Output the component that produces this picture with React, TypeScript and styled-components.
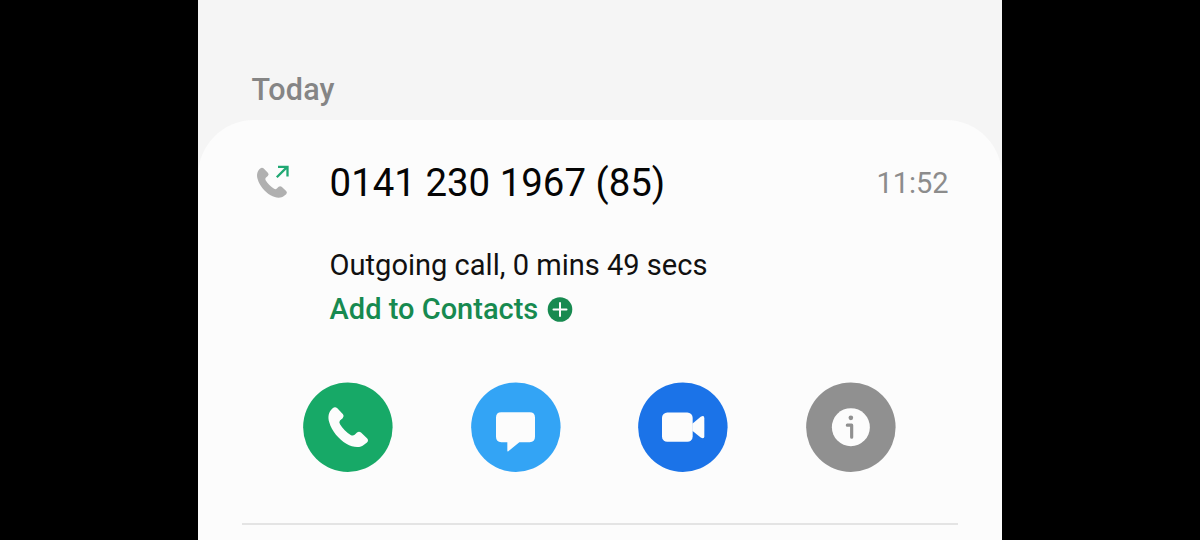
import React from "react";
import styled, { createGlobalStyle } from "styled-components";

const GlobalStyle = createGlobalStyle`
  * {
    box-sizing: border-box;
  }

  body {
    margin: 0;
    background: #000;
    font-family: Roboto, "Liberation Sans", sans-serif;
  }

  svg {
    display: block;
  }
`;

const Screen = styled.main`
  width: 804px;
  height: 540px;
  margin-left: 197.6px;
  background: #f5f5f5;
  overflow: hidden;
`;

const DayTitle = styled.h2`
  height: 120px;
  margin: 0;
  padding: 72px 0 0 54px;
  color: #858585;
  font-size: 30.5px;
  font-weight: 500;
  line-height: 36px;
  letter-spacing: 0.2px;
`;

const Card = styled.section`
  height: 420px;
  padding: 40px 44px 0;
  border-radius: 56px 56px 0 0;
  background: #fcfcfc;
`;

const CallRow = styled.div`
  display: flex;
  align-items: center;
  height: 46px;
  padding: 0 9px 0 13px;
`;

const CallIcon = styled.svg`
  width: 36px;
  height: 36px;
  margin-right: 39px;
`;

const PhoneNumber = styled.span`
  flex: 1;
  color: #050505;
  font-size: 38.4px;
  line-height: 46px;
`;

const Time = styled.time`
  color: #8c8c8c;
  font-size: 29px;
  line-height: 46px;
`;

const Details = styled.div`
  padding: 37px 0 0 88px;
`;

const CallInfo = styled.p`
  margin: 0;
  color: #111;
  font-size: 29.05px;
  line-height: 44px;
`;

const AddContact = styled.button`
  display: flex;
  align-items: center;
  gap: 9px;
  height: 44px;
  padding: 0;
  border: 0;
  background: none;
  color: #178a50;
  font-family: inherit;
  font-size: 29px;
  font-weight: 500;
  line-height: 44px;
`;

const Actions = styled.div`
  display: flex;
  justify-content: space-between;
  margin-top: 51px;
  padding: 0 61.5px 0 61.7px;
`;

const ActionButton = styled.button`
  width: 90px;
  height: 90px;
  padding: 0;
  border: 0;
  border-radius: 50%;
  background: none;
`;

const Divider = styled.hr`
  height: 2px;
  margin: 51px 0 0;
  border: 0;
  background: #e4e4e4;
`;

const HANDSET =
  "M89 77Q96 71 103 77L120 95Q125 101 119 107L111 114Q107 119 111 125C118 137 131 150 144 158Q150 161 155 157L162 150Q168 145 174 150L192 167Q198 173 192 180L183 187C172 197 150 196 130 184C108 170 86 146 79 120C74 104 76 88 89 77Z";

const OutgoingIcon = () => (
  <CallIcon viewBox="0 0 36 36">
    <g transform="translate(-17.2 -16) scale(0.252)">
      <path d={HANDSET} fill="#b0b0b0" />
    </g>
    <path
      d="M21.8 12.2 32.2 1.9M23 1.9H32.5V11.4"
      fill="none"
      stroke="#20a873"
      strokeWidth="2.3"
    />
  </CallIcon>
);

const PlusIcon = () => (
  <svg width="26" height="25" viewBox="0 0 26 25">
    <circle cx="13" cy="12.5" r="12.3" fill="#178a50" />
    <path
      d="M13 6V19M6.5 12.5H19.5"
      stroke="#fcfcfc"
      strokeWidth="2"
      strokeLinecap="round"
    />
  </svg>
);

const RoundIcon: React.FC<{ color: string; children: React.ReactNode }> = ({
  color,
  children,
}) => (
  <svg width="90" height="90" viewBox="0 -1.5 270 270" fill="#fcfcfc">
    <circle cx="134.6" cy="134" r="134.2" fill={color} />
    {children}
  </svg>
);

const PhoneIcon = () => (
  <RoundIcon color="#17a967">
    <path d={HANDSET} />
  </RoundIcon>
);

const MessageIcon = () => (
  <RoundIcon color="#33a4f5">
    <path d="M91 89H176Q192 89 192 105V163Q192 179 176 179H145L112 206Q109 208 109 204V179H91Q75 179 75 163V105Q75 89 91 89Z" />
  </RoundIcon>
);

const VideoIcon = () => (
  <RoundIcon color="#1b73e8">
    <rect x="72" y="90" width="92" height="88" rx="16" />
    <path d="M163 124 188 103Q199 97 199 107V161Q199 171 188 165L163 145Z" />
  </RoundIcon>
);

const InfoIcon = () => (
  <RoundIcon color="#909090">
    <circle cx="134.6" cy="134" r="57" />
    <circle cx="134.6" cy="106" r="7" fill="#909090" />
    <path
      d="M124 128H137V164"
      fill="none"
      stroke="#909090"
      strokeWidth="9.5"
      strokeLinecap="round"
      strokeLinejoin="round"
    />
  </RoundIcon>
);

const App: React.FC = () => {
  return (
    <>
      <GlobalStyle />
      <Screen>
        <DayTitle>Today</DayTitle>
        <Card>
          <CallRow>
            <OutgoingIcon />
            <PhoneNumber>0141 230 1967 (85)</PhoneNumber>
            <Time>11:52</Time>
          </CallRow>
          <Details>
            <CallInfo>Outgoing call, 0 mins 49 secs</CallInfo>
            <AddContact>
              Add to Contacts
              <PlusIcon />
            </AddContact>
          </Details>
          <Actions>
            <ActionButton>
              <PhoneIcon />
            </ActionButton>
            <ActionButton>
              <MessageIcon />
            </ActionButton>
            <ActionButton>
              <VideoIcon />
            </ActionButton>
            <ActionButton>
              <InfoIcon />
            </ActionButton>
          </Actions>
          <Divider />
        </Card>
      </Screen>
    </>
  );
};

export default App;
